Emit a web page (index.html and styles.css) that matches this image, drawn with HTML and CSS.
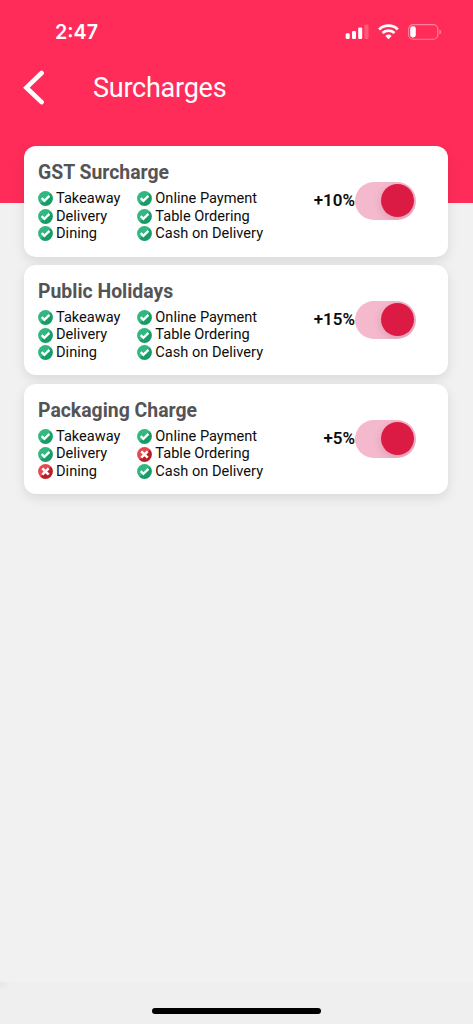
FILE: index.html
```html
<!DOCTYPE html>
<html lang="en">
<head>
<meta charset="utf-8">
<title>Surcharges</title>
<link rel="stylesheet" href="styles.css">
</head>
<body>
<svg class="defs" width="0" height="0" aria-hidden="true">
  <defs>
    <linearGradient id="green" x1="0" y1="0" x2="1" y2="1"><stop offset=".5" stop-color="#33b780"/><stop offset=".5" stop-color="#179c68"/></linearGradient>
    <linearGradient id="red" x1="0" y1="0" x2="1" y2="1"><stop offset=".5" stop-color="#e5484d"/><stop offset=".5" stop-color="#b91f27"/></linearGradient>
    <symbol id="yes" viewBox="0 0 15 15"><circle cx="7.5" cy="7.5" r="7.4" fill="url(#green)"/><path d="M3.7 7.1l2.7 2.8 5.1-5" fill="none" stroke="#fff" stroke-width="2.3"/></symbol>
    <symbol id="no" viewBox="0 0 15 15"><circle cx="7.5" cy="7.5" r="7.4" fill="url(#red)"/><path d="M4.3 4.3l6.4 6.4M10.7 4.3l-6.4 6.4" fill="none" stroke="#fff" stroke-width="2.6"/></symbol>
  </defs>
</svg>
<div class="screen">
  <header class="header">
    <div class="status">
      <span class="time">2:47</span>
      <svg class="indicators" width="98" height="20" viewBox="0 0 98 20" fill="#fff">
        <rect x="0.7" y="11.3" width="4" height="5.7" rx="1.2"/>
        <rect x="7" y="9" width="4" height="8" rx="1.2"/>
        <rect x="13.2" y="5.5" width="4" height="11.5" rx="1.2"/>
        <rect x="19.5" y="2.5" width="4" height="14.5" rx="1.2" opacity=".22"/>
        <g fill="none" stroke="#fff" stroke-width="2.8"><path d="M34.2 7.4a13.6 13.6 0 0 1 18.6 0"/><path d="M37.5 11a8.8 8.8 0 0 1 12 0"/></g>
        <path d="M43.5 17.2l-3.2-3.3a4.7 4.7 0 0 1 6.4 0z"/>
        <rect x="63.6" y="2.6" width="29.2" height="14.6" rx="4.5" fill="none" stroke="#fff" stroke-opacity=".4" stroke-width="1.1"/>
        <rect x="65.2" y="4.3" width="5.6" height="11.2" rx="2.4"/>
        <path d="M94.4 7.5q1.7 .7 1.7 2.4t-1.7 2.4z" opacity=".4"/>
      </svg>
    </div>
    <div class="nav">
      <svg width="24" height="36" viewBox="0 0 24 36" fill="none" stroke="#fff" stroke-width="4.6" stroke-linecap="round" stroke-linejoin="miter"><path d="M19.6 3L4.4 17.7l15.2 14.4"/></svg>
      <h1 class="title">Surcharges</h1>
    </div>
  </header>
  <main class="cards">
    <section class="card">
      <div class="info">
        <h2 class="name">GST Surcharge</h2>
        <div class="options">
          <span class="option"><svg class="mark"><use href="#yes"/></svg>Takeaway</span><span class="option"><svg class="mark"><use href="#yes"/></svg>Online Payment</span>
          <span class="option"><svg class="mark"><use href="#yes"/></svg>Delivery</span><span class="option"><svg class="mark"><use href="#yes"/></svg>Table Ordering</span>
          <span class="option"><svg class="mark"><use href="#yes"/></svg>Dining</span><span class="option"><svg class="mark"><use href="#yes"/></svg>Cash on Delivery</span>
        </div>
      </div>
      <span class="rate">+10%</span>
      <span class="switch"><span class="knob"></span></span>
    </section>
    <section class="card">
      <div class="info">
        <h2 class="name">Public Holidays</h2>
        <div class="options">
          <span class="option"><svg class="mark"><use href="#yes"/></svg>Takeaway</span><span class="option"><svg class="mark"><use href="#yes"/></svg>Online Payment</span>
          <span class="option"><svg class="mark"><use href="#yes"/></svg>Delivery</span><span class="option"><svg class="mark"><use href="#yes"/></svg>Table Ordering</span>
          <span class="option"><svg class="mark"><use href="#yes"/></svg>Dining</span><span class="option"><svg class="mark"><use href="#yes"/></svg>Cash on Delivery</span>
        </div>
      </div>
      <span class="rate">+15%</span>
      <span class="switch"><span class="knob"></span></span>
    </section>
    <section class="card">
      <div class="info">
        <h2 class="name">Packaging Charge</h2>
        <div class="options">
          <span class="option"><svg class="mark"><use href="#yes"/></svg>Takeaway</span><span class="option"><svg class="mark"><use href="#yes"/></svg>Online Payment</span>
          <span class="option"><svg class="mark"><use href="#yes"/></svg>Delivery</span><span class="option"><svg class="mark"><use href="#no"/></svg>Table Ordering</span>
          <span class="option"><svg class="mark"><use href="#no"/></svg>Dining</span><span class="option"><svg class="mark"><use href="#yes"/></svg>Cash on Delivery</span>
        </div>
      </div>
      <span class="rate">+5%</span>
      <span class="switch"><span class="knob"></span></span>
    </section>
  </main>
  <footer class="footer"><span class="home"></span></footer>
</div>
</body>
</html>
```
FILE: styles.css
```css
* { box-sizing: border-box; }
body { margin: 0; font-family: Roboto, sans-serif; background: #f1f1f1; }
.defs { position: absolute; }
.screen { display: flex; flex-direction: column; height: 1024px; overflow: hidden; }
.header { flex: none; height: 203px; background: #ff2c59; color: #fff; }
.status { display: flex; justify-content: space-between; align-items: center; height: 64px; padding: 0 28px 0 55px; }
.time { font-family: Inter, sans-serif; font-weight: 600; font-size: 19.7px; line-height: 24px; }
.indicators { margin-right: 2px; }
.nav { display: flex; align-items: center; height: 47px; padding-left: 22px; }
.title { margin: 0 0 0 47px; font-weight: 400; font-size: 27px; line-height: 32px; letter-spacing: -.25px; }
.cards { flex: 1; display: flex; flex-direction: column; gap: 8.4px; margin-top: -57px; padding: 0 25px 0 24px; }
.card { display: flex; height: 110.5px; padding: 14px 32px 0 14px; border-radius: 12px; background: #fff; box-shadow: 0 4px 12px rgba(0, 0, 0, .1); }
.info { flex: 1; }
.name { margin: 0; padding-top: 1px; font-weight: 700; font-size: 19.4px; line-height: 24px; color: #545456; }
.options { display: grid; grid-template-columns: 99.3px 1fr; grid-auto-rows: 17.5px; margin-top: 5px; }
.option { display: flex; align-items: center; gap: 3px; font-size: 14.6px; line-height: 17.5px; color: #0d0d0d; white-space: nowrap; }
.mark { flex: none; width: 15px; height: 15px; }
.rate { margin-top: 30.4px; font-weight: 600; font-size: 17px; line-height: 20px; color: #0d0d0d; }
.switch { display: flex; align-items: center; justify-content: flex-end; width: 61px; height: 38px; margin-top: 22px; padding-right: 2px; border-radius: 19px; background: #f4b9cd; overflow: hidden; }
.knob { width: 33px; height: 33px; margin-bottom: 1px; border-radius: 50%; background: #dc1b45; box-shadow: 0 3px 8px rgba(100, 0, 35, .16); }
.footer { display: flex; justify-content: center; align-items: flex-start; flex: none; height: 42px; padding-top: 26px; background: radial-gradient(ellipse 12px 8px at 0 1px, #e7e7e7, #efefef); }
.home { width: 169px; height: 6px; border-radius: 3px; background: #000; }
```
